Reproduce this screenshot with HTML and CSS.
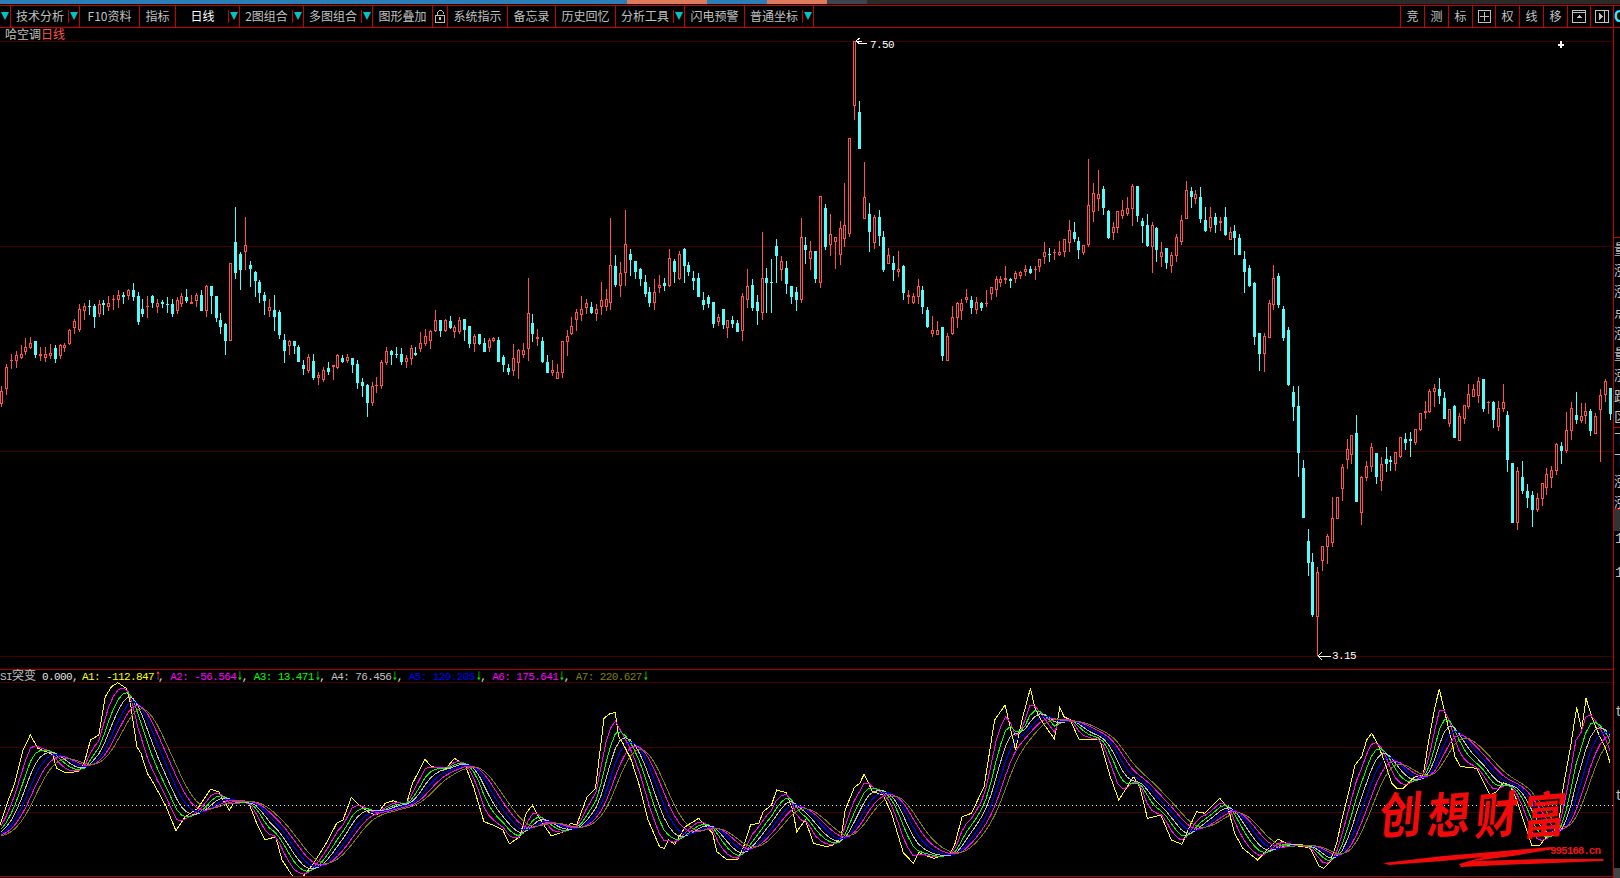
FILE: index.html
```html
<!DOCTYPE html>
<html lang="zh-CN">
<head>
<meta charset="utf-8">
<title>哈空调 日线</title>
<link rel="stylesheet" href="styles.css">
</head>
<body>
<div class="app">
  <div class="topstrip">
    <i class="seg seg-b1"></i><i class="seg seg-o1"></i><i class="seg seg-b2"></i><i class="seg seg-o2"></i><i class="seg seg-g"></i><i class="seg seg-d"></i>
  </div>
  <div class="toolbar">
    <div class="cell w11"><span class="tri"></span></div>
    <div class="cell combo w69"><span class="label">技术分析</span><span class="caret"><span class="tri"></span></span></div>
    <div class="cell w60"><span class="label">F10资料</span></div>
    <div class="cell w36"><span class="label">指标</span></div>
    <div class="cell combo w64"><span class="label on">日线</span><span class="caret"><span class="tri"></span></span></div>
    <div class="cell combo w64"><span class="label">2图组合</span><span class="caret"><span class="tri"></span></span></div>
    <div class="cell combo w69"><span class="label">多图组合</span><span class="caret"><span class="tri"></span></span></div>
    <div class="cell w60"><span class="label">图形叠加</span></div>
    <div class="cell w15">
      <svg class="ico" width="12" height="15" viewBox="0 0 12 15" shape-rendering="crispEdges"><path d="M3 6V3h1V2h1V1h3v1h1v1h1v2H9V3H8V2H5v1H4v3zM1 6h10v8H1zM2 7v6h8V7zM5 8h2v3H5z" fill="#c0c0c0" fill-rule="evenodd"/></svg>
    </div>
    <div class="cell w60"><span class="label">系统指示</span></div>
    <div class="cell w48"><span class="label">备忘录</span></div>
    <div class="cell w60"><span class="label">历史回忆</span></div>
    <div class="cell combo w69"><span class="label">分析工具</span><span class="caret"><span class="tri"></span></span></div>
    <div class="cell w60"><span class="label">闪电预警</span></div>
    <div class="cell combo w69"><span class="label">普通坐标</span><span class="caret"><span class="tri"></span></span></div>
    <div class="spacer"></div>
    <div class="cell w24"><span class="label">竞</span></div>
    <div class="cell w24"><span class="label">测</span></div>
    <div class="cell w24"><span class="label">标</span></div>
    <div class="cell w23">
      <svg class="ico" width="13" height="13" viewBox="0 0 13 13" shape-rendering="crispEdges"><path d="M.5.5h12v12H.5zM6.5 2v9M2 6.5h9" fill="none" stroke="#c0c0c0"/></svg>
    </div>
    <div class="cell w24"><span class="label">权</span></div>
    <div class="cell w24"><span class="label">线</span></div>
    <div class="cell w24"><span class="label">移</span></div>
    <div class="cell w23">
      <svg class="ico" width="14" height="13" viewBox="0 0 14 13" shape-rendering="crispEdges"><path d="M.5.5h13v12H.5zM1 2.5h12" fill="none" stroke="#c0c0c0"/><path d="M7 5l3 3H4z" fill="#c0c0c0"/></svg>
    </div>
    <div class="cell w23">
      <svg class="ico" width="14" height="13" viewBox="0 0 14 13" shape-rendering="crispEdges"><path d="M.5.5h13v12H.5zM9.5 1v11" fill="none" stroke="#c0c0c0"/><path d="M4 3l4 3.5L4 10z" fill="#c0c0c0"/></svg>
    </div>
    <div class="corner">G</div>
  </div>
  <div class="body">
    <div class="charts">
      <section class="panel panel-main">
        <svg id="kline" class="plot" width="1613" height="641" viewBox="0 28 1613 641" shape-rendering="crispEdges"></svg>
        <div class="title">哈空调<span class="title-red">日线</span></div>
        <div class="note note-high">7.50</div>
        <div class="note note-low">3.15</div>
        <div class="cursor"></div>
      </section>
      <section class="panel panel-sub">
        <svg id="osc" class="plot" width="1613" height="206" viewBox="0 670 1613 206" shape-rendering="crispEdges"></svg>
        <div class="legend"><span class="c-gray">SI<span class="zh">突变</span></span> <span class="c-white lead">0.000,</span> <span class="c-yellow">A1: -112.847</span><span class="arr arr-up c-red">↑</span><span class="c-white">,</span> <span class="c-mag">A2: -56.564</span><span class="arr c-green">↓</span><span class="c-white">,</span> <span class="c-green">A3: 13.471</span><span class="arr c-green">↓</span><span class="c-white">,</span> <span class="c-gray">A4: 76.456</span><span class="arr c-green">↓</span><span class="c-white">,</span> <span class="c-blue">A5: 129.205</span><span class="arr c-green">↓</span><span class="c-white">,</span> <span class="c-mag">A6: 175.641</span><span class="arr c-green">↓</span><span class="c-white">,</span> <span class="c-olive">A7: 220.627</span><span class="arr c-green">↓</span></div>
        <div class="mark">
          <div class="mark-text"><span>创</span><span>想</span><span>财</span><span>富</span></div>
          <svg class="mark-brush" width="222" height="22" viewBox="0 0 222 22"><path d="M0 17L60 10 120 5 168 1 171 3 130 10 90 15 160 13 221 13 220 15 120 19 78 21 76 18 100 11 60 15 6 19z" fill="#f00a0a"/></svg>
          <div class="mark-url">995168.cn</div>
        </div>
      </section>
    </div>
    <aside class="strip">
      <div class="strip-top"></div>
      <div class="strip-list">量<br>涨<br>涨<br>点<br>涨<br>量<br>涨<br>跌<br>区</div>
      <div class="strip-list strip-b">下<br>下<br>涨<br>涨</div>
      <div class="strip-thumb"></div>
      <div class="strip-fill">
        <span class="strip-num">1</span>
        <span class="strip-num">1</span>
        <span class="strip-num strip-t1">t</span>
        <span class="strip-num strip-t2">t</span>
      </div>
      <div class="strip-end"></div>
    </aside>
  </div>
</div>
<script src="chart.js"></script>
</body>
</html>
```

FILE: styles.css
```css
* { box-sizing: border-box; }
html, body { margin: 0; padding: 0; background: #000; }
body {
  width: 1620px; height: 878px; overflow: hidden;
  font-family: "Noto Sans CJK SC", "Liberation Sans", sans-serif;
  font-size: 12px; color: #c0c0c0;
}
.app { display: flex; flex-direction: column; width: 1620px; height: 878px; }

.topstrip { display: flex; height: 4px; margin-bottom: 1px; flex: none; }
.seg { display: block; height: 4px; }
.seg-b1 { width: 627px; background: #2a7fb8; }
.seg-o1 { width: 80px; background: #dd7c5c; }
.seg-b2 { width: 60px; background: #2a7fb8; }
.seg-o2 { width: 60px; background: #dd7c5c; }
.seg-g { width: 40px; background: #3b4652; }
.seg-d { flex: 1; background: #2b2b2b; }

.toolbar {
  display: flex; height: 23px; flex: none;
  border-top: 1px solid #c80000; border-bottom: 1px solid #c80000;
  line-height: 21px;
}
.cell {
  display: flex; align-items: center; justify-content: center;
  height: 21px; flex: none; border-right: 1px solid #c80000;
}
.w11 { width: 11px; } .w15 { width: 15px; } .w23 { width: 23px; } .w24 { width: 24px; }
.w36 { width: 36px; } .w48 { width: 48px; } .w60 { width: 60px; } .w64 { width: 64px; } .w69 { width: 69px; }
.combo { justify-content: flex-start; }
.combo .label { flex: 1; text-align: center; padding-left: 1px; }
.label { white-space: nowrap; color: #c0c0c0; margin-top: -2px; }
.label.on { color: #fff; }
.caret {
  display: flex; align-items: flex-start; justify-content: center; flex: none;
  width: 11px; height: 13px; padding-top: 2px; border-left: 1px solid #c80000;
}
.tri {
  display: block; width: 0; height: 0;
  border-left: 4px solid transparent; border-right: 4px solid transparent;
  border-top: 8px solid #00c4c4;
}
.w11 .tri { margin-top: -2px; }
.ico { display: block; }
.spacer { flex: 1; height: 21px; border-right: 1px solid #c80000; }
.corner {
  flex: none; width: 6px; height: 21px; overflow: hidden;
  font-family: "Liberation Sans", sans-serif; font-size: 16px; font-weight: 700;
  color: #38e8f8; line-height: 21px;
}

.body { display: flex; flex: 1; min-height: 0; }
.charts { display: flex; flex-direction: column; width: 1614px; flex: none; border-right: 1px solid #c80000; }
.panel { position: relative; }
.panel-main { height: 642px; border-bottom: 1px solid #a80000; flex: none; }
.panel-sub { height: 207px; border-bottom: 1px solid #a80000; flex: none; }
.plot { display: block; }

.title { position: absolute; left: 5px; top: -2px; line-height: 15px; white-space: nowrap; }
.title-red { color: #ff5050; }
.note {
  position: absolute; color: #fff; line-height: 12px;
  font-family: "Liberation Mono", monospace; font-size: 11px; letter-spacing: -.6px;
}
.note-high { left: 870px; top: 11px; }
.note-low { left: 1332px; top: 622px; }
.cursor { position: absolute; left: 1558px; top: 13px; width: 6px; height: 7px;
  background: linear-gradient(#fff,#fff) center/6px 2px no-repeat, linear-gradient(#fff,#fff) center/2px 7px no-repeat;
}
.legend {
  position: absolute; left: 0; top: -1px; white-space: pre; line-height: 12px;
  font-family: "Liberation Mono", monospace; font-size: 11px; letter-spacing: -.6px;
}
.lead { margin-right: -2px; }
.zh { font-family: "Noto Sans CJK SC", sans-serif; font-size: 12px; letter-spacing: 0; }
.arr {
  display: inline-block; width: 10px; margin-left: 1px; margin-right: -5.5px;
  transform: scaleX(.55); transform-origin: left center;
  font-family: "DejaVu Sans", sans-serif; font-size: 12px; letter-spacing: 0;
}
.arr-up { margin-right: -7px; }
.c-gray { color: #c0c0c0; } .c-white { color: #e0e0e0; } .c-yellow { color: #ff0; }
.c-red { color: #ff5050; } .c-mag { color: #f0f; } .c-green { color: #0f0; }
.c-blue { color: #00f; } .c-olive { color: #808000; }

.mark { position: absolute; left: 1380px; top: 115px; width: 230px; height: 91px; }
.mark-text {
  display: flex; gap: 6px; color: #f00a0a;
  font-family: "Noto Sans CJK SC", sans-serif; font-weight: 700; font-size: 42px; line-height: 54px;
}
.mark-text span { display: block; transform: skewX(-10deg) rotate(-5deg) scaleY(1.18); }
.mark-url {
  position: absolute; left: 170px; top: 61px; color: #e81818; line-height: 11px;
  font-family: "Liberation Mono", monospace; font-weight: 700; font-size: 11px; letter-spacing: -1.05px;
}
.mark-brush { position: absolute; left: 3px; top: 61px; display: block; }

.strip { flex: 1; min-width: 0; display: flex; flex-direction: column; overflow: hidden; font-size: 14px; line-height: 21px; }
.strip-top { height: 210px; flex: none; border-bottom: 1px solid #c80000; }
.strip-list { flex: none; height: 189px; overflow: hidden; white-space: nowrap; }
.strip-b { height: 83px; border-top: 1px solid #c80000; border-bottom: 1px solid #c80000; }
.strip-thumb { flex: none; height: 21px; background: #333; }
.strip-fill { position: relative; flex: 1; min-height: 0; }
.strip-num { position: absolute; left: 1px; font-family: "Liberation Mono", monospace; font-size: 14px; }
.strip-num:nth-child(1) { top: -2px; }
.strip-num:nth-child(2) { top: 32px; }
.strip-t1 { top: 171px; }
.strip-t2 { top: 255px; }
.strip-end { flex: none; height: 10px; background: #444; }
```

FILE: chart.js
```js
// Candles: kind hi bodyTop bodyBottom lo, in crop coordinates then mapped to page y.
var A = "r 558 574 611 621;r 492 502 566 585;r 462 481 482 506;r 453 466 483 503;r 435 463 474 476;r 414 442 456 466;r 411 430 444 446;c 423 423 465 473;r 442 462 468 483;r 442 462 473 485;r 432 460 469 477;c 435 444 477 488;r 432 436 468 476;r 430 435 444 456;r 388 390 432 435;r 357 363 384 401;r 312 328 389 396;r 309 319 332 360;c 300 318 320 345;c 312 318 351 384;r 300 312 342 351;c 300 309 315 345;r 288 309 320 333;r 285 297 298 330;r 270 285 299 323;c 277 285 291 312;r 267 270 288 300;c 249 270 291 303;c 277 288 366 375;c 297 327 342 351;r 288 319 320 354;c 285 288 309 324;r 297 309 320 339;c 300 306 312 324;c 291 312 314 339;c 297 312 342 351;r 292 300 333 342;r 280 288 311 320;c 267 291 303 309;r 285 306 311 312;r 280 285 303 321;c 270 285 333 333;r 255 258 332 351;c 258 258 288 342;c 288 288 354 366;c 339 360 381 402;c 369 372 423 465;r 190 190 422 422;c 21 126 219 237;c 156 162 210 270;r 51 136 156 210;c 183 195 207 261;c 213 216 243 291;c 240 246 279 309;c 277 285 303 345;r 297 322 332 351;c 285 330 351 393;c 330 336 405 417;c 402 420 453 489;r 420 423 438 465;c 423 423 438 462;c 435 441 486 486;c 480 495 507 525;r 462 472 514 519;c 462 483 534 540;r 516 526 534 555;r 502 511 540 546;c 486 504 516 525;r 495 496 502 540;r 463 465 504 507;c 465 474 486 489;r 462 472 484 489;c 474 474 495 519;c 480 492 549 567;c 534 546 558 591;c 552 555 609 651;r 546 558 609 618;r 531 556 557 579;r 480 487 558 567;r 441 454 488 495;c 450 453 465 495;c 441 462 465 474;c 444 462 486 495;r 465 475 486 504;r 435 444 477 495;c 441 459 465 468";
var B = "r 905 940 958 965;r 898 918 942 948;r 900 903 932 957;r 840 870 903 905;c 870 870 903 921;r 868 870 903 905;c 858 873 894 898;r 885 892 905 923;r 862 870 905 912;c 867 867 900 934;c 888 888 942 953;r 912 918 942 965;c 912 912 942 945;c 924 939 966 966;r 924 930 954 966;r 920 924 934 937;c 921 930 996 996;c 975 981 1005 1026;c 1002 1014 1026 1035;r 942 984 1023 1038;r 957 960 999 1047;r 939 960 975 984;r 744 850 956 993;c 852 879 912 936;r 897 921 927 948;c 921 933 996 1000;c 975 996 1029 1029;r 990 1020 1030 1038;r 1002 1026 1046 1046;r 933 934 1028 1044;r 900 918 936 978;r 862 888 912 915;r 838 846 870 903;r 798 837 856 873;r 808 820 834 852;c 816 831 849 852;r 822 837 852 873;r 756 810 831 855;r 777 807 831 843;r 564 706 819 840;c 675 708 765 771;r 696 729 768 801;r 540 642 728 768;c 657 672 690 738;c 693 693 726 747;c 714 717 747 768;c 735 756 792 801;c 771 786 819 831;r 747 786 820 840;r 735 765 774 789;c 744 759 768 783;r 657 684 768 771;c 687 693 726 760;r 663 672 747 750;c 654 657 708 759;c 696 705 726 738;c 723 743 753 780;c 729 744 801 801;c 786 810 825 840;c 795 801 822 834;c 816 816 882 894;r 852 861 876 888;c 837 837 885 897;r 870 870 893 924;c 858 870 882 894;c 870 879 906 906;r 790 798 903 933;r 717 768 810 834;c 747 765 834 843;c 795 816 843 885;r 606 744 849 870;c 715 744 759 850;c 687 756 758 848;c 627 648 678 760;r 678 694 720 754;c 693 714 762 792;c 768 768 801 822;c 771 786 810 843;r 564 622 810 819;c 621 645 660 702;r 633 663 687 720;c 663 663 747 759;r 499 499 759 774;c 522 534 651 660;r 552 612 645 678;r 621 622 637 717;r 573 594 675 705;r 459 586 628 651;r 325 325 613 622;r 33 33 227 270;c 213 246 357 357;r 396 502 566 567;c 519 552 606 666;r 555 561 639 657;c 540 561 618 648;c 603 621 720 726;r 654 675 702 702;c 678 699 720 753;r 663 717 726 741;c 706 708 789 810;r 780 796 800 822;r 789 798 819 822;r 747 768 801 822;c 768 780 831 852;c 831 840 891 894;r 858 900 912 921;r 873 900 915 915;c 891 891 978 993;r 909 918 993 993;r 828 861 912 915;r 816 819 864 893";
var C = "r 470 483 505 533;r 441 463 472 482;c 462 474 497 515;r 464 480 502 515;c 480 483 497 506;r 444 483 484 493;r 435 436 456 473;r 403 412 443 463;r 403 412 423 435;r 373 409 413 426;c 408 411 416 438;r 388 392 411 423;r 388 390 402 411;r 370 383 390 402;c 373 382 393 396;r 373 382 384 414;r 352 353 375 391;r 302 332 345 366;c 320 337 339 360;r 321 331 333 355;r 298 330 339 342;r 294 294 330 345;r 237 267 304 331;c 243 273 293 302;c 288 300 324 351;r 310 312 333 340;r 56 193 310 317;r 127 158 212 243;r 89 161 174 210;c 137 146 200 222;c 208 210 290 293;r 243 258 274 296;r 211 211 259 275;r 178 208 224 233;r 169 202 218 225;r 130 136 203 254;c 136 136 224 243;c 231 240 254 305;c 219 251 314 317;r 243 252 316 393;c 258 260 324 361;r 302 332 345 376;c 320 320 363 382;r 331 340 372 393;r 278 288 342 361;r 223 238 301 311;r 121 149 233 234;c 139 151 169 201;r 149 161 174 190;c 139 169 234 246;c 198 237 269 272;r 198 229 259 272;c 217 228 251 275;r 228 240 245 269;c 198 228 282 284;r 258 273 295 296;c 252 270 290 341;c 279 291 340 341;c 329 352 390 453;c 370 379 432 435;c 420 423 582 606;c 571 571 633 683;r 571 581 632 686;r 473 483 585 585;r 370 409 487 503;c 393 402 487 497";
var D = "c 306 309 338 341;c 327 330 385 386;c 386 392 407 421;c 386 406 453 477;c 460 468 518 518;c 529 541 563 576;c 553 562 615 617;r 567 572 617 656;r 546 546 561 571;r 534 536 547 564;r 497 518 543 547;r 497 497 519 519;r 464 467 489 501;r 439 449 460 469;r 435 435 455 464;c 415 433 502 502;r 476 477 513 525;r 461 466 478 481;r 443 447 467 472;c 453 453 477 484;r 457 464 481 491;c 447 459 464 472;c 456 460 462 471;r 452 452 464 471;r 437 437 457 458;c 433 439 443 450;c 432 439 441 457;r 429 429 443 445;r 413 413 430 431;r 401 411 413 419;r 389 391 412 413;r 384 388 392 407;c 378 389 396 404;c 392 398 419 419;r 409 409 424 427;c 405 406 438 438;r 413 416 441 441;r 405 405 419 424;r 384 394 407 409;r 384 389 397 397;r 377 381 396 403;c 379 379 409 412;r 401 402 403 414;c 401 402 420 428;r 401 408 427 431;r 384 402 409 412;c 411 415 460 472;c 463 463 523 523;r 467 471 523 530;c 461 477 491 494;c 484 491 498 508;c 491 495 510 527;r 493 498 510 512;r 483 483 499 506;r 468 474 488 495;r 466 470 478 488;r 443 444 471 475;c 442 446 451 464;r 412 430 451 453;r 402 408 431 440;c 392 415 420 424;r 403 416 421 423;r 403 411 416 424;c 409 411 431 436;r 413 416 434 434;r 389 395 410 462;r 379 381 395 402;c 388 388 414 420";

function parse(str, oy, sy) {
  return str.split(";").map(function (row) {
    var p = row.split(" ");
    return { k: p[0], hi: oy + p[1] / sy, top: oy + p[2] / sy, bot: oy + p[3] / sy, lo: oy + p[4] / sy };
  });
}
var candles = parse(A, 200, 3).concat(parse(B, 30, 3), parse(C, 140, 2.958), parse(D, 0, 1));

var NS = "http://www.w3.org/2000/svg";
function addPath(svg, d, attrs) {
  var el = document.createElementNS(NS, "path");
  el.setAttribute("d", d);
  for (var a in attrs) el.setAttribute(a, attrs[a]);
  svg.appendChild(el);
}
function rect(x, y, w, h) { return "M" + x + " " + y + "h" + w + "v" + h + "h" + (-w) + "z"; }

var kline = document.getElementById("kline");
addPath(kline, rect(0, 41, 1613, 1) + rect(0, 246, 1613, 1) + rect(0, 451, 1613, 1) + rect(0, 656, 1613, 1), { fill: "#420000" });
var red = "", cyan = "";
candles.forEach(function (c, i) {
  var x = Math.floor(1.5 + 4.875 * i);
  var hi = Math.round(c.hi), top = Math.round(c.top), bot = Math.round(c.bot), lo = Math.round(c.lo);
  if (bot <= top) bot = top + 1;
  if (lo < bot) lo = bot;
  if (hi > top) hi = top;
  var s = rect(x, hi, 1, Math.max(top - hi, 0)) + rect(x, bot, 1, Math.max(lo - bot, 0));
  if (c.k === "c") {
    cyan += s + rect(x - 1, top, 3, bot - top);
  } else if (bot - top <= 2) {
    red += s + rect(x - 1, top, 3, bot - top);
  } else {
    red += s + rect(x - 1, top, 3, 1) + rect(x - 1, bot - 1, 3, 1) + rect(x - 1, top, 1, bot - top) + rect(x + 1, top, 1, bot - top);
  }
});
addPath(kline, red, { fill: "#ff5050" });
addPath(kline, cyan, { fill: "#54fcfc" });
// Extreme price pointers
addPath(kline, "M867 44L858 43M856 41l4-3M856 41l4 3M856 41h6", { stroke: "#fff", fill: "none" });
addPath(kline, "M1331 656H1318M1318 656l4-4M1318 656l4 4", { stroke: "#fff", fill: "none" });

// Oscillator: the fast line is traced, each slower line smooths the one before it.
var z4 = [0,495,20,420,35,370,55,270,72,225,90,265,110,275,125,285,135,325,155,338,185,335,200,310,215,240,235,225,250,110,265,80,280,68,300,85,310,130,325,260,335,280,350,340,365,370,395,440,418,512,440,470,470,445,500,388,520,395,530,420,545,450,555,430,590,425,610,490,630,540,655,530,670,600,695,648,720,650,745,610,775,550,800,490,815,480,835,412,850,432,880,460,895,465,915,430,935,422,965,435,980,370,1010,298,1025,320,1060,325,1080,295,1105,315,1125,380,1150,485,1175,497,1195,510,1210,552,1235,530,1250,460,1265,436,1280,470,1295,500,1310,528,1345,512,1355,490,1370,495,1395,410,1415,385,1435,175,1450,160,1462,158,1470,230,1480,250,1500,300,1520,380,1540,480,1567,560];
var z11 = [10,535,20,510,35,523,60,470,92,445,110,470,125,490,135,545,160,570,185,568,200,525,215,465,235,460,245,425,265,405,277,360,300,368,315,420,325,485,345,450,365,520,395,530,410,525,430,505,440,420,462,352,475,340,485,312,505,365,530,375,550,430,578,548,602,580,615,548,650,565,690,550,700,525,718,440,740,430,770,350,795,150,820,105,830,160,845,240,860,150,880,55,890,110,905,150,937,207,950,112,960,140,975,150,995,207,1015,208,1045,210,1070,320,1090,390,1110,350,1125,320,1140,350,1158,445,1190,435,1215,510,1240,523,1260,465,1275,425,1295,430,1330,385,1350,415,1365,490,1385,535,1420,570,1450,530,1468,507,1495,525,1530,530,1545,535,1567,590];
var z5 = [0,620,12,625,30,605,50,550,65,480,90,380,105,315,125,290,140,240,155,220,175,255,195,310,215,370,230,385,250,385,285,350,310,345,325,250,345,140,358,88,375,160,392,230,405,290,420,318,440,322,470,325,490,365,510,405,530,395,550,368,570,375,590,420,610,480,635,555,660,555,680,530,715,500,730,380,750,270,770,142,785,210,798,115,815,170,835,220,855,260,870,308];
var pts = [];
function addPts(arr, ox, sx, oy) {
  for (var i = 0; i < arr.length; i += 2) pts.push([ox + arr[i] / sx, oy + arr[i + 1] / 3]);
}
addPts(z4, 0, 2.376, 660);
addPts(z11, 660, 2.376, 670);
addPts(z5, 1320, 3, 660);

function yAt(x) {
  if (x <= pts[0][0]) return 838 + (pts[0][1] - 838) * Math.max(0, 1 + x / 20);
  for (var i = 1; i < pts.length; i++) {
    if (x <= pts[i][0]) {
      var a = pts[i - 1], b = pts[i];
      return a[1] + (b[1] - a[1]) * (x - a[0]) / (b[0] - a[0] || 1);
    }
  }
  return pts[pts.length - 1][1];
}
var PAD = 20, xs = [], series = [];
for (var i = -PAD; i <= 330; i++) {
  xs.push(1.3 + 4.875 * i);
  series.push(yAt(1.3 + 4.875 * i));
}
function smooth(src) {
  var out = [src[0]];
  for (var i = 1; i < src.length; i++) out.push(out[i - 1] + 0.5 * (src[i] - out[i - 1]));
  return out;
}
function toPath(vals) {
  var out = [];
  for (var i = PAD; i < vals.length; i++) out.push(xs[i].toFixed(1) + "," + vals[i].toFixed(1));
  return "M" + out.join("L");
}

var osc = document.getElementById("osc");
addPath(osc, rect(0, 682, 1613, 1) + rect(0, 747, 1613, 1) + rect(0, 812, 1613, 1), { fill: "#420000" });
addPath(osc, "M0 805.5H1613", { stroke: "#e0e0e0", "stroke-dasharray": "1 3", fill: "none" });
var yellow = "M" + pts.map(function (p) { return p[0].toFixed(1) + "," + p[1].toFixed(1); }).join("L");
addPath(osc, yellow, { stroke: "#ffff00", fill: "none" });
var cur = series;
["#ff00ff", "#00ff00", "#c0c0c0", "#0000ff", "#ff00ff", "#808000"].forEach(function (col) {
  cur = smooth(cur);
  addPath(osc, toPath(cur), { stroke: col, fill: "none" });
});
```
